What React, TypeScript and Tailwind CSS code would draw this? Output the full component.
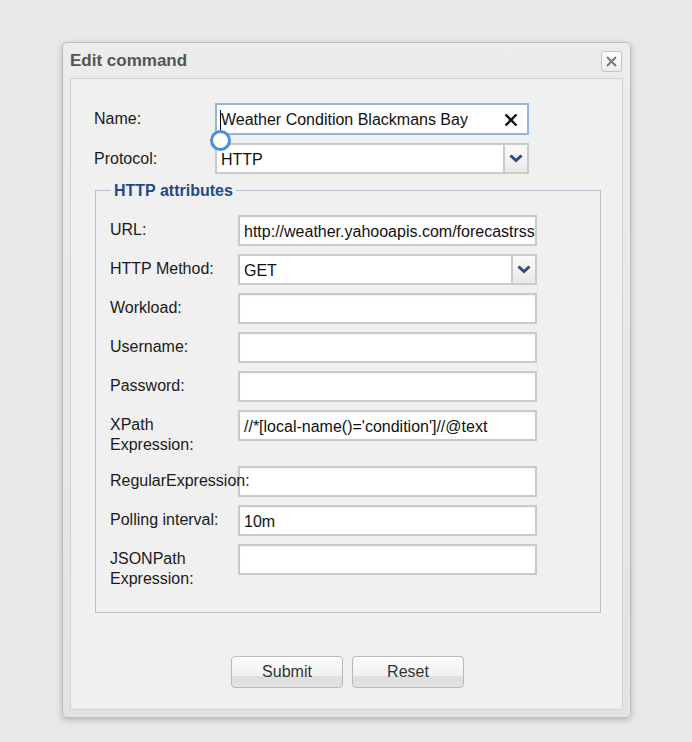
import React from "react";

const font = { fontFamily: '"Liberation Sans", Arial, sans-serif' };

function Chevron() {
  return (
    <svg width="14" height="9" viewBox="0 0 14 9">
      <path d="M1.5 1.5 L7 6.5 L12.5 1.5" fill="none" stroke="#2c4a7c" strokeWidth="3" strokeLinejoin="miter" />
    </svg>
  );
}

function TextBox({ value, width }: { value?: string; width: string }) {
  return (
    <div
      className={`${width} h-[31px] border-2 border-[#cacaca] bg-white flex items-center pl-[4px] pt-[3px] overflow-hidden whitespace-nowrap text-[16px] text-[#111] shadow-[inset_0_1px_2px_rgba(0,0,0,0.06)]`}
    >
      {value}
    </div>
  );
}

function SelectBox({ value, width }: { value: string; width: string }) {
  return (
    <div className={`${width} h-[31px] border-2 border-[#cacaca] bg-white flex items-stretch text-[16px] text-[#111]`}>
      <div className="flex-1 flex items-center pl-[4px] pt-[3px]">{value}</div>
      <div className="w-[24px] border-l-2 border-[#cacaca] bg-gradient-to-b from-[#fafafa] to-[#e9e9e9] flex items-center justify-center">
        <Chevron />
      </div>
    </div>
  );
}

function Row({ label, children, twoLine }: { label: React.ReactNode; children: React.ReactNode; twoLine?: boolean }) {
  return (
    <div className="flex items-start">
      <div className={`w-[128px] shrink-0 leading-[20px] pt-[5px] ${twoLine ? "pb-[3px]" : ""} text-[16px] text-[#1a1a1a] whitespace-nowrap`}>
        {label}
      </div>
      {children}
    </div>
  );
}

export default function App() {
  return (
    <div className="w-[692px] h-[742px] bg-[#e8e8e8] pt-[42px] pl-[62px]" style={font}>
      <div className="w-[569px] h-[676px] rounded-[5px] border border-[#bdbdbd] bg-gradient-to-b from-[#ececec] to-[#e3e3e3] shadow-[0_2px_6px_rgba(0,0,0,0.22)] px-[7px] pb-[7px] flex flex-col">
        <div className="h-[35px] flex items-center justify-between">
          <div className="text-[17px] font-bold text-[#555]">Edit command</div>
          <div className="w-[21px] h-[21px] mr-[1px] mt-[1px] rounded-[3px] border border-[#c3c3c3] bg-gradient-to-b from-[#ffffff] to-[#ececec] flex items-center justify-center">
            <svg width="13" height="13" viewBox="0 0 13 13">
              <path d="M2 2 L11 11 M11 2 L2 11" stroke="#7a7a7a" strokeWidth="2" />
            </svg>
          </div>
        </div>
        <div className="flex-1 border border-[#d2d2d2] bg-[#f0f0f0] pt-[24px] pl-[23px] pr-[21px] flex flex-col">
          <div className="relative flex flex-col gap-[8px]">
            <div className="flex items-center">
              <div className="w-[121px] shrink-0 text-[16px] text-[#1a1a1a]">Name:</div>
              <div className="w-[314px] h-[32px] border-2 border-[#93b6dc] bg-white flex items-center pl-[3px] pt-[2px] text-[16px] text-[#111] whitespace-nowrap overflow-hidden">
                <span className="w-[1px] h-[20px] bg-black" />
                <span>Weather Condition Blackmans Bay</span>
                <span className="ml-auto mr-[9px] flex items-center">
                  <svg width="14" height="14" viewBox="0 0 14 14">
                    <path d="M1.5 1.5 L12.5 12.5 M12.5 1.5 L1.5 12.5" stroke="#111" strokeWidth="2.4" />
                  </svg>
                </span>
              </div>
            </div>
            <div className="flex items-center">
              <div className="w-[121px] shrink-0 text-[16px] text-[#1a1a1a]">Protocol:</div>
              <SelectBox value="HTTP" width="w-[314px]" />
            </div>
            <div className="absolute left-[116px] top-[27px] w-[21px] h-[21px] rounded-full border-[3px] border-[#4a90dc] bg-white" />
          </div>

          <fieldset className="mt-[6px] ml-[1px] w-[506px] border border-[#b7bdcb] pl-[14px] pb-[20px]">
            <legend className="px-[3px] ml-[1px] text-[16px] font-bold text-[#1f4a8a] leading-[21px]">HTTP attributes</legend>
            <div className="mt-[14px] flex flex-col gap-[8px]">
              <Row label="URL:">
                <TextBox width="w-[299px]" value="http://weather.yahooapis.com/forecastrss" />
              </Row>
              <Row label="HTTP Method:">
                <SelectBox value="GET" width="w-[299px]" />
              </Row>
              <Row label="Workload:">
                <TextBox width="w-[299px]" />
              </Row>
              <Row label="Username:">
                <TextBox width="w-[299px]" />
              </Row>
              <Row label="Password:">
                <TextBox width="w-[299px]" />
              </Row>
              <Row twoLine label={<>XPath<br />Expression:</>}>
                <TextBox width="w-[299px]" value="//*[local-name()='condition']//@text" />
              </Row>
              <div className="relative flex items-start">
                <div className="w-[128px] shrink-0 leading-[20px] pt-[5px]" />
                <TextBox width="w-[299px]" />
                <div className="absolute left-0 top-[5px] leading-[20px] text-[16px] text-[#1a1a1a] whitespace-nowrap">RegularExpression:</div>
              </div>
              <Row label="Polling interval:">
                <TextBox width="w-[299px]" value="10m" />
              </Row>
              <Row twoLine label={<>JSONPath<br />Expression:</>}>
                <TextBox width="w-[299px]" />
              </Row>
            </div>
          </fieldset>

          <div className="mt-[43px] flex justify-center gap-[9px]">
            {["Submit", "Reset"].map((t) => (
              <div
                key={t}
                className="w-[112px] h-[32px] rounded-[4px] border border-[#b8b8b8] bg-[linear-gradient(to_bottom,#fbfbfb_0%,#f1f1f1_62%,#dedede_64%,#e4e4e4_100%)] flex items-center justify-center text-[16px] text-[#333] shadow-[inset_0_1px_0_#fff]"
              >
                {t}
              </div>
            ))}
          </div>
        </div>
      </div>
    </div>
  );
}
